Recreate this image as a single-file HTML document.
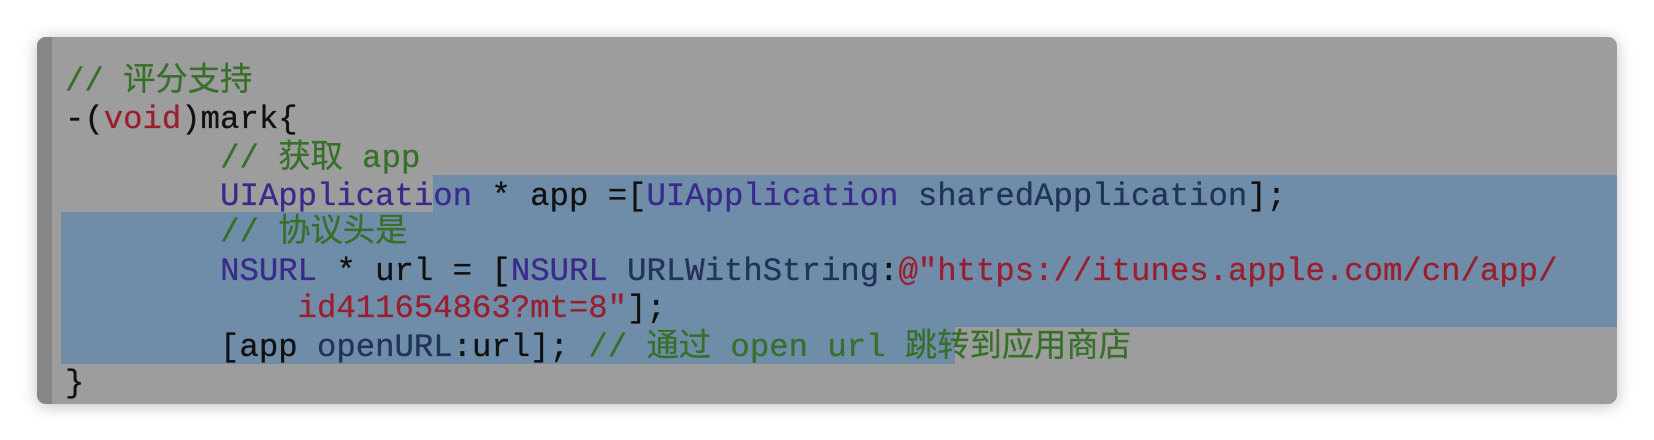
<!DOCTYPE html>
<html><head><meta charset="utf-8"><style>
body{margin:0;width:1654px;height:440px;background:#fff;overflow:hidden;position:relative}
.box{position:absolute;left:37px;top:37px;width:1580px;height:367px;background:#9d9d9d;border-radius:9px;box-shadow:0 2px 16px rgba(0,0,0,.25);overflow:hidden}
.strip{position:absolute;left:0;top:0;width:15px;height:100%;background:#868686}
.sel{position:absolute;background:#6f8da8}
.l{position:absolute;left:28px;font-family:"Liberation Mono","Noto Sans CJK SC",monospace;font-size:32.3px;line-height:38px;white-space:pre;color:#111;letter-spacing:0;-webkit-text-stroke:0.3px currentColor}
.c{color:#37702a}.p{color:#3a2a8c}.n{color:#22325a}.r{color:#9a1f2e}
</style></head><body>
<div class="box">
<div class="strip"></div>
<div class="sel" style="left:396px;top:138px;width:1184px;height:38px"></div>
<div class="sel" style="left:24px;top:175px;width:1556px;height:115px"></div>
<div class="sel" style="left:24px;top:289px;width:894px;height:38px"></div>
<div class="l" style="top:26px"><span class="c">// 评分支持</span></div>
<div class="l" style="top:64px">-(<span class="r">void</span>)mark{</div>
<div class="l" style="top:103px">        <span class="c">// 获取 app</span></div>
<div class="l" style="top:141px">        <span class="p">UIApplication</span> * app =[<span class="p">UIApplication</span> <span class="n">sharedApplication</span>];</div>
<div class="l" style="top:177px">        <span class="c">// 协议头是</span></div>
<div class="l" style="top:216px">        <span class="p">NSURL</span> * url = [<span class="p">NSURL</span> <span class="n">URLWithString</span>:<span class="r">@"https://itunes.apple.com/cn/app/</span></div>
<div class="l" style="top:253px">            <span class="r">id411654863?mt=8"</span>];</div>
<div class="l" style="top:292px">        [app <span class="n">openURL</span>:url]; <span class="c">// 通过 open url 跳转到应用商店</span></div>
<div class="l" style="top:328px">}</div>
</div>
</body></html>
